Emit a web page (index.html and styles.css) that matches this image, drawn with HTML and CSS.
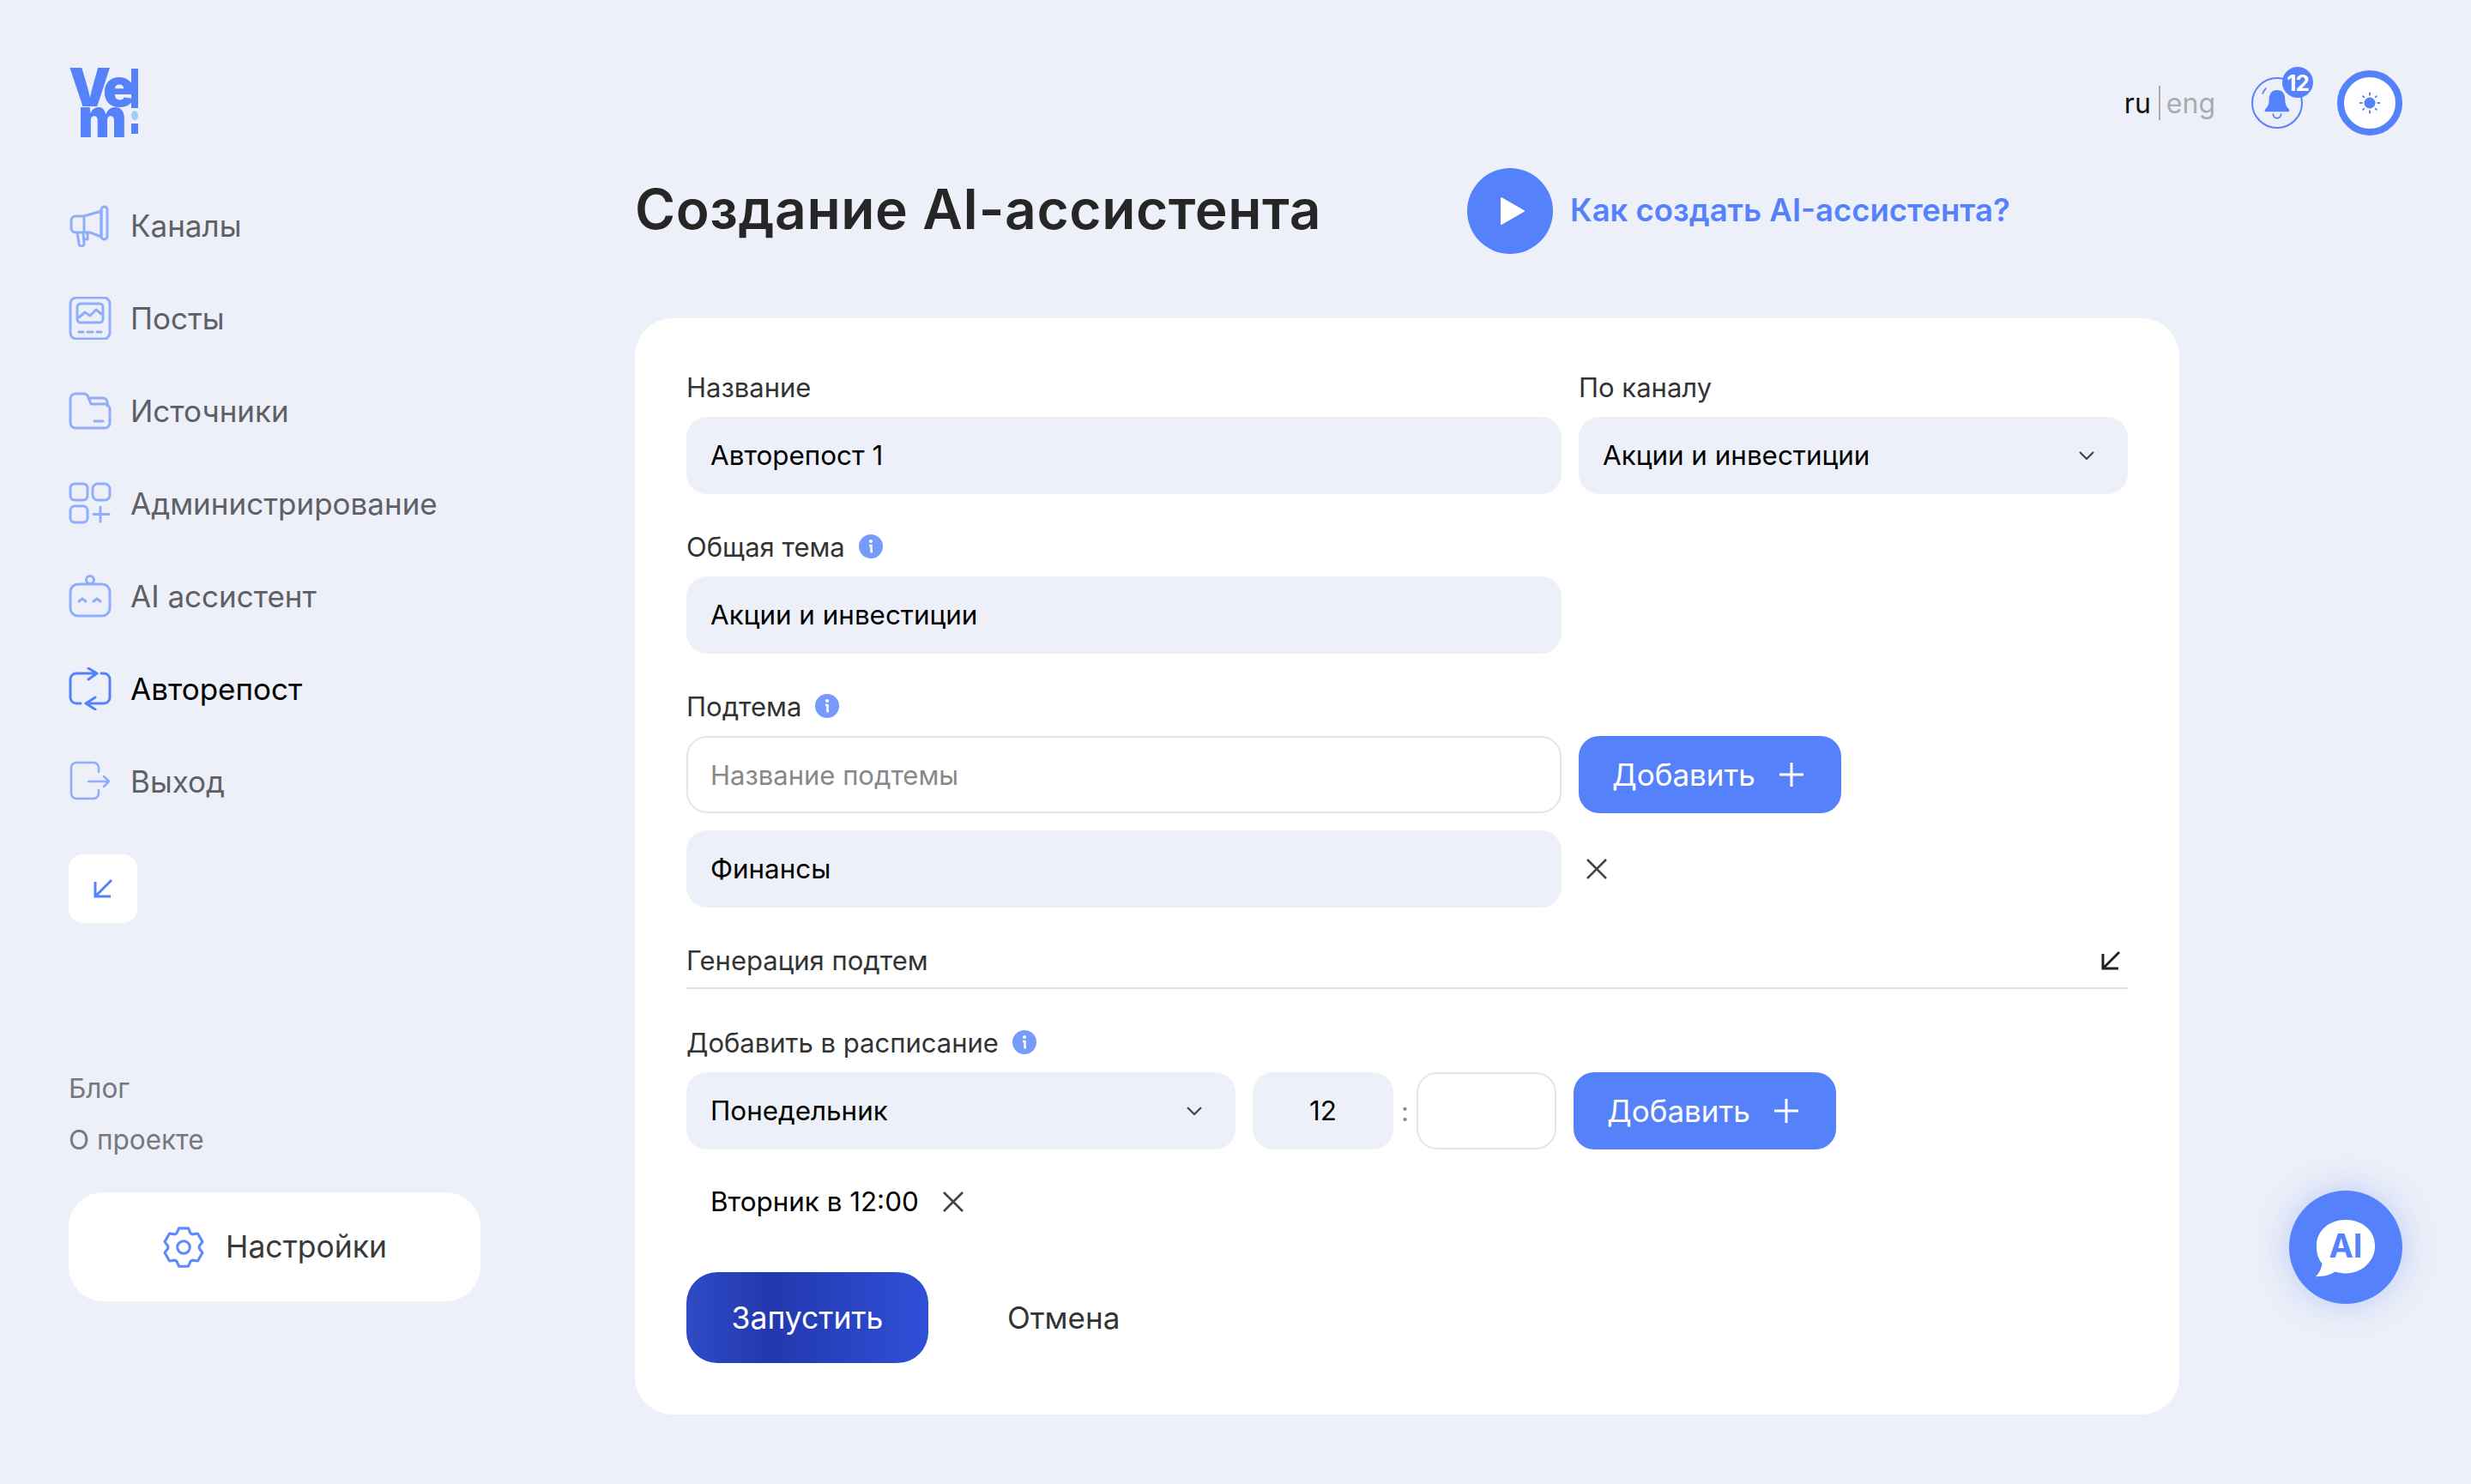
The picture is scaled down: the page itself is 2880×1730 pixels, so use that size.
FILE: index.html
```html
<!DOCTYPE html>
<html lang="ru">
<head>
    <meta charset="utf-8">
    <title>Создание AI-ассистента</title>
    <link rel="stylesheet" href="styles.css">
</head>
<body>
    <aside class="sidebar">
        <div class="logo">
            <div class="logo-letters">
                <span class="logo-top">Ve</span>
                <span class="logo-bottom">m</span>
            </div>
            <div class="logo-mark">
                <i class="logo-stem"></i>
                <i class="logo-dot"></i>
                <i class="logo-square"></i>
            </div>
        </div>

        <nav class="nav">
            <a class="nav-item">
                <svg class="nav-icon" viewBox="0 0 50 50"><path d="M18 14 L38 8 V38 L25 33 H8 a5 5 0 0 1-5-5 V19 a5 5 0 0 1 5-5 Z M18 14 V33"/><rect x="38" y="3" width="7" height="38" rx="3.5"/><path d="M10 33 L12 46 a3 3 0 0 0 6 0 L17 33 M18 41 h4 v-8"/></svg>
                Каналы
            </a>
            <a class="nav-item">
                <svg class="nav-icon" viewBox="0 0 50 50"><rect x="2" y="1" width="46" height="48" rx="7"/><rect x="10" y="8" width="30" height="22" rx="4"/><path d="M12 24 l7-6 6 4 7-7 6 5"/><path d="M12 41 h5 M22 41 h6 M33 41 h5"/></svg>
                Посты
            </a>
            <a class="nav-item">
                <svg class="nav-icon" viewBox="0 0 50 50"><path d="M2 11 a6 6 0 0 1 6-6 H17 a6 6 0 0 1 6 4 L26 17 H42 a6 6 0 0 1 6 6 V39 a6 6 0 0 1-6 6 H8 a6 6 0 0 1-6-6 Z"/><path d="M23 10 H40 a5 5 0 0 1 5 5 V19"/><path d="M30 37 H40"/></svg>
                Источники
            </a>
            <a class="nav-item">
                <svg class="nav-icon" viewBox="0 0 50 50"><rect x="2" y="2" width="20" height="19" rx="5"/><rect x="28" y="2" width="20" height="19" rx="6"/><rect x="2" y="28" width="20" height="19" rx="5"/><path d="M37 29 V46 M29 37.5 H47"/></svg>
                Администрирование
            </a>
            <a class="nav-item">
                <svg class="nav-icon" viewBox="0 0 50 50"><rect x="2" y="11" width="46" height="37" rx="9"/><circle cx="25" cy="6" r="4.5"/><path d="M12 31 l4-3 4 3 M29 31 l4-3 4 3"/></svg>
                AI ассистент
            </a>
            <a class="nav-item nav-item-active">
                <svg class="nav-icon" viewBox="0 0 50 50"><path d="M14 42 H9 a7 7 0 0 1-7-7 V14 a7 7 0 0 1 7-7 H33 M23 1 L33 7 L23 14"/><path d="M38 7 H41 a7 7 0 0 1 7 7 V35 a7 7 0 0 1-7 7 H20 M31 35 L20 42 L31 49"/></svg>
                Авторепост
            </a>
            <a class="nav-item">
                <svg class="nav-icon nav-icon-thin" viewBox="0 0 50 50"><path d="M35 14 V9 a6 6 0 0 0-6-6 H9 a6 6 0 0 0-6 6 V39 a6 6 0 0 0 6 6 H29 a6 6 0 0 0 6-6 V35"/><path d="M23 25 H47 M41 19 L47 25 L41 31"/></svg>
                Выход
            </a>
        </nav>

        <button class="collapse-btn">
            <svg class="arrow-icon" viewBox="0 0 24 24"><path d="M22 2 L3 21 M3 4 V21 H21"/></svg>
        </button>

        <div class="side-links">
            <a>Блог</a>
            <a>О проекте</a>
        </div>

        <a class="settings">
            <svg class="settings-icon" viewBox="0 0 48 48"><polygon points="18.7,2.7 29.3,2.7 31.7,8.3 33.8,9.5 39.8,8.7 45.1,17.9 41.5,22.8 41.5,25.2 45.1,30.1 39.8,39.3 33.8,38.5 31.7,39.7 29.3,45.3 18.7,45.3 16.3,39.7 14.2,38.5 8.2,39.3 2.9,30.1 6.5,25.2 6.5,22.8 2.9,17.9 8.2,8.7 14.2,9.5 16.3,8.3"/><circle cx="24" cy="24" r="7"/></svg>
            Настройки
        </a>
    </aside>

    <main class="main">
        <div class="topbar">
            <div class="lang"><span class="lang-active">ru</span><i class="lang-sep"></i><span class="lang-other">eng</span></div>
            <div class="bell">
                <svg viewBox="0 0 60 60"><path class="bell-fill" d="M30 14 c-7 0-10 5-10 12 c0 6-2 9-5 12 c-1 1 0 3 1 3 H44 c1 0 2-2 1-3 c-3-3-5-6-5-12 c0-7-3-12-10-12 Z"/><path class="bell-line" d="M25 44 a5 5 0 0 0 10 0 M16 12 c-2 2-3 4-4 6"/></svg>
                <span class="bell-count">12</span>
            </div>
            <div class="theme">
                <svg viewBox="0 0 30 30"><circle cx="15" cy="15" r="6"/><path d="M15 2 V6 M15 24 V28 M2 15 H6 M24 15 H28 M6 6 L8.500 8.500 M21.500 21.500 L24 24 M24 6 L21.500 8.500 M8.500 21.500 L6 24"/></svg>
            </div>
        </div>

        <div class="title-row">
            <h1 class="title">Создание AI-ассистента</h1>
            <a class="howto">
                <span class="play"><svg viewBox="0 0 30 34"><path d="M2 2 L28 17 L2 32 Z"/></svg></span>
                <span class="howto-text">Как создать AI-ассистента?</span>
            </a>
        </div>

        <form class="card">
            <div class="row">
                <div class="col-wide">
                    <label class="field-label">Название</label>
                    <input class="field field-full" type="text" value="Авторепост 1">
                </div>
                <div class="col-side">
                    <label class="field-label">По каналу</label>
                    <div class="field select">Акции и инвестиции
                        <svg class="chevron" viewBox="0 0 20 12"><path d="M2 2 L10 10 L18 2"/></svg>
                    </div>
                </div>
            </div>

            <div class="block block-theme">
                <label class="field-label">Общая тема
                    <svg class="info" viewBox="0 0 28 28"><circle cx="14" cy="14" r="14"/><circle class="info-i" cx="14" cy="8" r="2"/><path class="info-i-line" d="M12 13 H14.500 V20 H16"/></svg>
                </label>
                <input class="field col-wide" type="text" value="Акции и инвестиции">
            </div>

            <div class="block block-sub">
                <label class="field-label">Подтема
                    <svg class="info" viewBox="0 0 28 28"><circle cx="14" cy="14" r="14"/><circle class="info-i" cx="14" cy="8" r="2"/><path class="info-i-line" d="M12 13 H14.500 V20 H16"/></svg>
                </label>
                <div class="row">
                    <input class="field field-empty col-wide" type="text" placeholder="Название подтемы">
                    <button type="button" class="btn-add">Добавить
                        <svg class="plus" viewBox="0 0 28 28"><path d="M14 0 V28 M0 14 H28"/></svg>
                    </button>
                </div>
                <div class="row row-tag">
                    <input class="field col-wide" type="text" value="Финансы">
                    <svg class="cross" viewBox="0 0 24 24"><path d="M1 1 L23 23 M23 1 L1 23"/></svg>
                </div>
            </div>

            <div class="generate">
                <span>Генерация подтем</span>
                <svg class="arrow-icon arrow-dark" viewBox="0 0 24 24"><path d="M22 2 L3 21 M3 4 V21 H21"/></svg>
            </div>

            <div class="block-schedule">
                <label class="field-label">Добавить в расписание
                    <svg class="info" viewBox="0 0 28 28"><circle cx="14" cy="14" r="14"/><circle class="info-i" cx="14" cy="8" r="2"/><path class="info-i-line" d="M12 13 H14.500 V20 H16"/></svg>
                </label>
                <div class="row schedule">
                    <div class="field select day">Понедельник
                        <svg class="chevron" viewBox="0 0 20 12"><path d="M2 2 L10 10 L18 2"/></svg>
                    </div>
                    <div class="time-group">
                        <input class="field time" type="text" value="12">
                        <span class="colon">:</span>
                        <input class="field field-empty time time-min" type="text">
                    </div>
                    <button type="button" class="btn-add">Добавить
                        <svg class="plus" viewBox="0 0 28 28"><path d="M14 0 V28 M0 14 H28"/></svg>
                    </button>
                </div>
            </div>

            <div class="slot">
                <span>Вторник в 12:00</span>
                <svg class="cross" viewBox="0 0 24 24"><path d="M1 1 L23 23 M23 1 L1 23"/></svg>
            </div>

            <div class="actions">
                <button type="button" class="btn-run">Запустить</button>
                <button type="button" class="btn-cancel">Отмена</button>
            </div>
        </form>
    </main>

    <a class="ai-fab">
        <svg viewBox="0 0 80 76"><path class="bubble" d="M40 2 C60 2 76 15 76 34 C76 53 60 68 40 68 C35 68 30 67 27 66 C21 70 13 72 3 72 C8 67 10 62 11 56 C6 50 4 43 4 34 C4 15 20 2 40 2 Z"/><text x="40" y="49" text-anchor="middle">AI</text></svg>
    </a>
</body>
</html>
```

FILE: styles.css
```css
* {
    box-sizing: border-box;
}
html, body {
    margin: 0;
    padding: 0;
}
body {
    position: relative;
    display: flex;
    width: 2880px;
    min-height: 1730px;
    background-color: #edf0f8;
    font-family: Inter, "Noto Sans", sans-serif;
    color: #333;
}
svg {
    display: block;
    flex: none;
}
input, button {
    font-family: inherit;
}
.sidebar {
    flex: none;
    width: 740px;
    padding: 80px 0 0 80px;
}
.logo {
    display: flex;
    width: 81px;
    height: 80px;
    justify-content: space-between;
    color: #5581fb;
    font-weight: 900;
}
.logo-letters {
    display: flex;
    flex-direction: column;
    margin-top: -3px;
}
.logo-top {
    height: 43px;
    font-size: 62px;
    line-height: 50px;
    letter-spacing: -5px;
}
.logo-bottom {
    height: 40px;
    margin-left: 11px;
    font-size: 64px;
    line-height: 33px;
    transform: scaleX(0.94);
    transform-origin: left;
}
.logo-mark {
    display: flex;
    flex-direction: column;
    width: 11px;
    gap: 3px;
}
.logo-stem {
    height: 46px;
    background: #5581fb;
}
.logo-dot {
    height: 11px;
    border-radius: 50%;
    background: #a0cef5;
}
.logo-square {
    height: 12px;
    margin-top: 1px;
    background: #5581fb;
}
.nav {
    margin-top: 49px;
}
.nav-item {
    display: flex;
    align-items: center;
    height: 108px;
    gap: 22px;
    font-size: 35px;
    color: #5e6066;
}
.nav-item-active {
    color: #000;
}
.nav-icon {
    width: 50px;
    height: 50px;
    fill: none;
    stroke: #8fadfc;
    stroke-width: 3;
    stroke-linecap: round;
    stroke-linejoin: round;
}
.nav-icon-thin {
    stroke-width: 2.500;
}
.nav-item-active .nav-icon {
    stroke: #5581fb;
}
.collapse-btn {
    display: flex;
    align-items: center;
    justify-content: center;
    width: 80px;
    height: 80px;
    margin-top: 31px;
    padding: 0;
    border: none;
    border-radius: 16px;
    background: #fff;
}
.arrow-icon {
    width: 24px;
    height: 24px;
    fill: none;
    stroke: #5581fb;
    stroke-width: 3;
}
.arrow-dark {
    stroke: #222;
}
.side-links {
    display: flex;
    flex-direction: column;
    gap: 20px;
    margin-top: 173px;
    font-size: 31.500px;
    line-height: 40px;
    color: #76787d;
}
.settings {
    display: flex;
    align-items: center;
    justify-content: center;
    width: 480px;
    height: 127px;
    gap: 24px;
    margin-top: 41px;
    border-radius: 40px;
    background: #fff;
    font-size: 35.500px;
    color: #3a3a3a;
}
.settings-icon {
    width: 50px;
    height: 50px;
    fill: none;
    stroke: #5d8bfb;
    stroke-width: 3;
    stroke-linejoin: round;
}
.main {
    flex: 1;
}
.topbar {
    display: flex;
    align-items: center;
    justify-content: flex-end;
    height: 76px;
    margin-top: 82px;
    padding-right: 80px;
}
.lang {
    display: flex;
    align-items: center;
    font-size: 32px;
}
.lang-active {
    color: #111;
}
.lang-other {
    color: #a9abb0;
}
.lang-sep {
    width: 2px;
    height: 40px;
    margin: 0 7px 0 9px;
    background: #aaa;
}
.bell {
    position: relative;
    width: 60px;
    height: 60px;
    margin-left: 42px;
    border: 2px solid #5581fb;
    border-radius: 50%;
}
.bell svg {
    width: 56px;
    height: 56px;
}
.bell-fill {
    fill: #5581fb;
}
.bell-line {
    fill: none;
    stroke: #5581fb;
    stroke-width: 2;
    stroke-linecap: round;
}
.bell-count {
    position: absolute;
    top: -14px;
    right: -14px;
    display: flex;
    align-items: center;
    justify-content: center;
    width: 36px;
    height: 36px;
    border-radius: 50%;
    background: #5581fb;
    color: #fff;
    font-size: 26px;
    font-weight: 700;
    letter-spacing: -1px;
}
.theme {
    display: flex;
    align-items: center;
    justify-content: center;
    width: 76px;
    height: 76px;
    margin-left: 40px;
    border: 8px solid #5581fb;
    border-radius: 50%;
    background: #fff;
}
.theme svg {
    width: 28px;
    height: 28px;
    fill: #5581fb;
    stroke: #5581fb;
    stroke-width: 2;
}
.title-row {
    display: flex;
    align-items: center;
    height: 100px;
    margin-top: 38px;
}
.title {
    margin: 0;
    width: 970px;
    padding-bottom: 5px;
    font-size: 64px;
    font-weight: 600;
    letter-spacing: 0.6px;
    color: #262626;
}
.howto {
    display: flex;
    align-items: center;
    gap: 20px;
    font-size: 36.500px;
    font-weight: 600;
    color: #5581fb;
}
.howto-text {
    padding-bottom: 3px;
}
.play {
    display: flex;
    align-items: center;
    justify-content: center;
    width: 100px;
    height: 100px;
    padding-left: 5px;
    border-radius: 50%;
    background: #5581fb;
}
.play svg {
    width: 30px;
    height: 34px;
    fill: #fff;
    stroke: #fff;
    stroke-width: 2;
    stroke-linejoin: round;
}
.card {
    width: 1800px;
    height: 1278px;
    margin-top: 75px;
    padding: 60px 60px 0;
    border-radius: 44px;
    background: #fff;
}
.row {
    display: flex;
    gap: 20px;
}
.col-wide {
    width: 1020px;
}
.col-side {
    width: 640px;
}
.block {
    margin-top: 40px;
}
.block-theme,
.block-sub {
    margin-top: 41px;
}
.block-schedule {
    margin-top: 42px;
}
.field-label {
    display: flex;
    align-items: center;
    gap: 16px;
    height: 40px;
    margin-bottom: 15px;
    font-size: 31px;
    color: #333;
}
.field {
    display: block;
    height: 90px;
    padding: 0 28px;
    border: none;
    border-radius: 24px;
    outline: none;
    background: #edf0f8;
    font-size: 31.400px;
    color: #000;
}
.field-full {
    width: 100%;
}
.field-empty {
    padding: 0 26px;
    border: 2px solid #e6e6e6;
    background: #fff;
    font-size: 31px;
}
.field-empty::placeholder {
    color: #888;
}
.select {
    display: flex;
    align-items: center;
    justify-content: space-between;
    padding-right: 38px;
}
.chevron {
    width: 20px;
    height: 12px;
    fill: none;
    stroke: #444;
    stroke-width: 2.200;
}
.info {
    width: 28px;
    height: 28px;
    fill: #769bfb;
}
.info-i {
    fill: #fff;
}
.info-i-line {
    fill: none;
    stroke: #fff;
    stroke-width: 2.500;
}
.btn-add {
    display: flex;
    align-items: center;
    gap: 28px;
    width: 306px;
    height: 90px;
    padding: 0 0 0 39px;
    border: none;
    border-radius: 24px;
    background: #5581fb;
    color: #fff;
    font-size: 35px;
}
.plus {
    width: 28px;
    height: 28px;
    fill: none;
    stroke: #fff;
    stroke-width: 3;
    stroke-linecap: round;
}
.row-tag {
    align-items: center;
    gap: 29px;
    margin-top: 20px;
}
.cross {
    width: 24px;
    height: 24px;
    fill: none;
    stroke: #444;
    stroke-width: 2.600;
}
.generate {
    display: flex;
    align-items: center;
    justify-content: space-between;
    height: 95px;
    padding: 30px 8px 0 0;
    border-bottom: 2px solid #e3e3e6;
    font-size: 31px;
}
.schedule {
    align-items: center;
}
.day {
    width: 640px;
}
.time-group {
    display: flex;
    align-items: center;
}
.time {
    width: 164px;
    padding: 0;
    text-align: center;
}
.time-min {
    width: 163px;
}
.colon {
    width: 27px;
    text-align: center;
    font-size: 31px;
    color: #888;
}
.slot {
    display: flex;
    align-items: center;
    gap: 28px;
    height: 60px;
    margin-top: 31px;
    padding-left: 28px;
    font-size: 31.400px;
    color: #000;
}
.actions {
    display: flex;
    align-items: center;
    margin-top: 52px;
}
.btn-run {
    width: 282px;
    height: 106px;
    border: none;
    border-radius: 36px;
    background: linear-gradient(90deg, #2f4bc6 0%, #2238ae 35%, #3050d8 100%);
    color: #fff;
    font-size: 35.500px;
}
.btn-cancel {
    margin-left: 92px;
    padding: 0;
    border: none;
    background: none;
    color: #333;
    font-size: 35px;
}
.ai-fab {
    position: absolute;
    top: 1388px;
    left: 2668px;
    display: flex;
    align-items: center;
    justify-content: center;
    width: 132px;
    height: 132px;
    border-radius: 50%;
    background: #5581fb;
    box-shadow: 0 0 40px rgba(85, 129, 251, 0.35);
}
.ai-fab svg {
    width: 76px;
    height: 72px;
    margin-top: 4px;
}
.bubble {
    fill: #fff;
}
.ai-fab text {
    font-family: Inter, sans-serif;
    font-size: 40px;
    font-weight: 700;
    fill: #5581fb;
}
```
